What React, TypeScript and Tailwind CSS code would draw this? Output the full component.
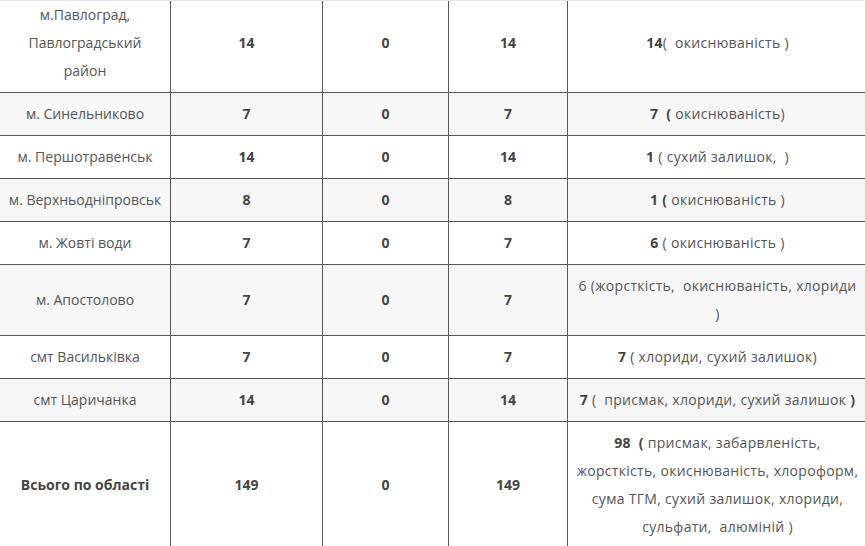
const rows: { name: string; a: string; b: string; c: string; note: React.ReactNode; bold?: boolean }[] = [
  {
    name: "м.Павлоград, Павлоградський район",
    a: "14",
    b: "0",
    c: "14",
    note: (
      <>
        <b>14</b>(&nbsp; окиснюваність )
      </>
    ),
  },
  {
    name: "м. Синельниково",
    a: "7",
    b: "0",
    c: "7",
    note: (
      <>
        <b>7&nbsp; (</b> окиснюваність)
      </>
    ),
  },
  {
    name: "м. Першотравенськ",
    a: "14",
    b: "0",
    c: "14",
    note: (
      <>
        <b>1</b> ( сухий залишок,&nbsp; )
      </>
    ),
  },
  {
    name: "м. Верхньодніпровськ",
    a: "8",
    b: "0",
    c: "8",
    note: (
      <>
        <b>1 (</b> окиснюваність )
      </>
    ),
  },
  {
    name: "м. Жовті води",
    a: "7",
    b: "0",
    c: "7",
    note: (
      <>
        <b>6</b> ( окиснюваність )
      </>
    ),
  },
  {
    name: "м. Апостолово",
    a: "7",
    b: "0",
    c: "7",
    note: (
      <>
        6 (жорсткість,&nbsp; окиснюваність, хлориди
        <br />)
      </>
    ),
  },
  {
    name: "смт Васильківка",
    a: "7",
    b: "0",
    c: "7",
    note: (
      <>
        <b>7</b> ( хлориди, сухий залишок)
      </>
    ),
  },
  {
    name: "смт Царичанка",
    a: "14",
    b: "0",
    c: "14",
    note: (
      <>
        <b>7</b> (&nbsp; присмак, хлориди, сухий залишок <b>)</b>
      </>
    ),
  },
  {
    name: "Всього по області",
    a: "149",
    b: "0",
    c: "149",
    bold: true,
    note: (
      <>
        <b>98&nbsp; (</b> присмак, забарвленість,
        <br />
        жорсткість, окиснюваність, хлороформ,
        <br />
        сума ТГМ, сухий залишок, хлориди,
        <br />
        сульфати,&nbsp; алюміній )
      </>
    ),
  },
];

export default function App() {
  return (
    <div className="w-[865px] h-[546px] overflow-hidden bg-white border-t border-[#e6e7ee] font-['Open_Sans',sans-serif] text-[14px] leading-[28px] text-[#555]">
      <table className="table-fixed border-collapse w-[868px] -mt-[8px] -ml-[1px]">
        <colgroup>
          <col className="w-[171px]" />
          <col className="w-[152px]" />
          <col className="w-[126px]" />
          <col className="w-[119px]" />
          <col className="w-[300px]" />
        </colgroup>
        <tbody>
          {rows.map((r, i) => (
            <tr key={i} className={i % 2 === 1 ? "bg-[#f7f7f7]" : "bg-white"}>
              <td className={`border border-[#5a5a5a] px-[6px] py-[7px] text-center align-middle ${r.bold ? "font-bold text-[#444]" : ""}`}>
                {r.name}
              </td>
              <td className="border border-[#5a5a5a] px-2 py-[7px] text-center align-middle font-bold text-[#444]">{r.a}</td>
              <td className="border border-[#5a5a5a] px-2 py-[7px] text-center align-middle font-bold text-[#444]">{r.b}</td>
              <td className="border border-[#5a5a5a] px-2 py-[7px] text-center align-middle font-bold text-[#444]">{r.c}</td>
              <td className="border border-[#5a5a5a] px-1 py-[7px] text-center align-middle whitespace-nowrap tracking-[0.3px] [&_b]:text-[#444]">
                {r.note}
              </td>
            </tr>
          ))}
        </tbody>
      </table>
    </div>
  );
}
